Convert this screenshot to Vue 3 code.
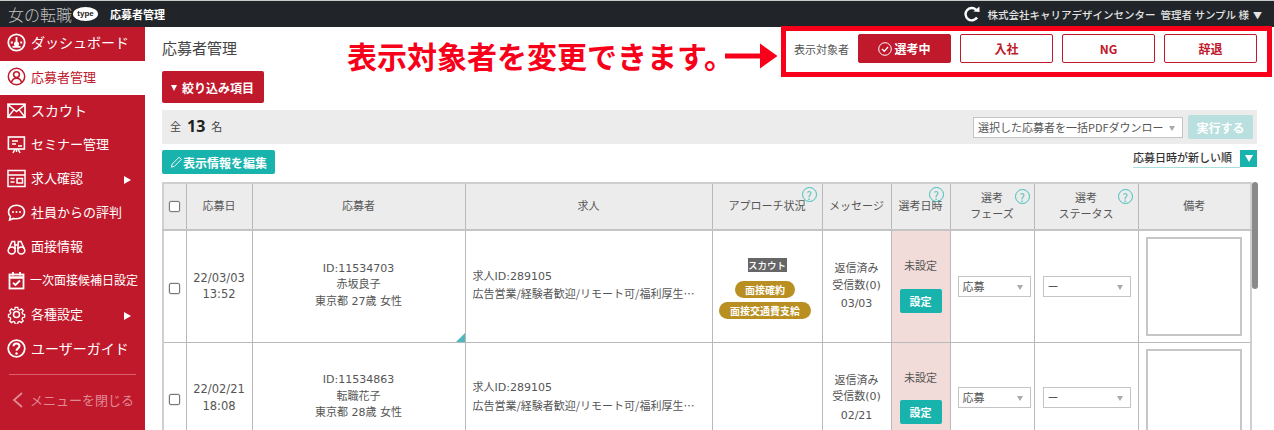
<script setup>
const navItems = [
  { label: 'ダッシュボード', icon: 'dash', size: 'lg' },
  { label: '応募者管理', icon: 'user', active: true },
  { label: 'スカウト', icon: 'mail', size: 'lg' },
  { label: 'セミナー管理', icon: 'seminar' },
  { label: '求人確認', icon: 'job', arrow: true },
  { label: '社員からの評判', icon: 'chat' },
  { label: '面接情報', icon: 'bino' },
  { label: '一次面接候補日設定', icon: 'cal', size: 'sm' },
  { label: '各種設定', icon: 'gear', arrow: true },
  { label: 'ユーザーガイド', icon: 'help', size: 'lg' }
]
const filters = ['入社', 'NG', '辞退']
const rows = [
  { date: '22/03/03', time: '13:52', id: 'ID:11534703', name: '赤坂良子', info: '東京都 27歳 女性', recv: '03/03', tags: true },
  { date: '22/02/21', time: '18:08', id: 'ID:11534863', name: '転職花子', info: '東京都 28歳 女性', recv: '02/21', tags: false }
]
</script>

<template>
  <div class="page">
    <header class="topbar">
      <div class="logo">
        <span class="logo-text">女の転職</span>
        <span class="logo-pill">type</span>
      </div>
      <span class="top-title">応募者管理</span>
      <div class="top-right">
        <svg class="refresh" width="16" height="16" viewBox="0 0 16 16">
          <path d="M13 11.5A6.2 6.2 0 1 1 12 3.6" fill="none" stroke="#fff" stroke-width="2.4" />
          <path d="M9.4 5.6 15.6 6 15.4 0.6Z" fill="#fff" />
        </svg>
        <span class="company">株式会社キャリアデザインセンター</span>
        <span class="admin">管理者 サンプル 様<small>▼</small></span>
      </div>
    </header>

    <div class="body">
      <aside class="sidebar">
        <nav>
          <a v-for="item in navItems" :key="item.label" class="nav-item" :class="{ active: item.active }">
            <svg class="nav-icon" width="19" height="19" viewBox="0 0 19 19" fill="none" stroke="currentColor" stroke-width="1.5">
              <template v-if="item.icon === 'dash'">
                <circle cx="9.5" cy="9.5" r="8.2" stroke-width="1.8" />
                <path d="M9.5 4v7M3.8 9.5h2M13.2 9.5h2M5.5 13.8h8" stroke-width="1.8" />
                <circle cx="9.5" cy="11" r="1.8" fill="currentColor" />
              </template>
              <template v-else-if="item.icon === 'user'">
                <circle cx="9.5" cy="9.5" r="8.2" />
                <circle cx="9.5" cy="7.6" r="2.9" />
                <path d="M4.4 15.6c.7-3 2.6-4.4 5.1-4.4s4.4 1.4 5.1 4.4" />
              </template>
              <template v-else-if="item.icon === 'mail'">
                <rect x="1" y="3.2" width="17" height="13" stroke-width="1.7" />
                <path d="M1 3.6 9.5 10.6 18 3.6M1 16 7 8.6M18 16 12 8.6" stroke-width="1.5" />
              </template>
              <template v-else-if="item.icon === 'seminar'">
                <rect x="1.4" y="2" width="16" height="12" stroke-width="1.6" />
                <path d="M5 6h6M5 9h4M11 11h4M9.5 14v3M6 18l2-4M13 18l-2-4" />
              </template>
              <template v-else-if="item.icon === 'job'">
                <rect x="1" y="1.5" width="17" height="16" stroke-width="1.5" />
                <path d="M1 6h17M3.5 9.5h4M3.5 13h4" />
                <rect x="10" y="9.5" width="5.5" height="4.5" />
              </template>
              <template v-else-if="item.icon === 'chat'">
                <path d="M9.5 2.2c4.6 0 8 2.9 8 6.8s-3.400 6.800-8 6.800c-1 0-2-.1-2.900-.4L2.600 17l.8-3.600C2 12.200 1.500 10.700 1.500 9c0-3.900 3.400-6.800 8-6.800Z" stroke-width="1.6" />
                <circle cx="6" cy="9" r="1" fill="currentColor" stroke="none" />
                <circle cx="9.500" cy="9" r="1" fill="currentColor" stroke="none" />
                <circle cx="13" cy="9" r="1" fill="currentColor" stroke="none" />
              </template>
              <template v-else-if="item.icon === 'bino'">
                <circle cx="4.700" cy="13.500" r="3.500" stroke-width="1.600" />
                <circle cx="14.300" cy="13.500" r="3.500" stroke-width="1.600" />
                <path d="M1.600 12 5 4.500h2.600l.6 7.500M17.400 12 14 4.500h-2.600l-.6 7.500M8 8h3" stroke-width="1.600" />
              </template>
              <template v-else-if="item.icon === 'cal'">
                <rect x="2.500" y="3.500" width="14" height="14" stroke-width="1.800" />
                <path d="M2.500 6.500h14" stroke-width="2.500" />
                <path d="M6 1v3.500M13 1v3.500" stroke-width="1.800" />
                <path d="M6 11.800 8.500 14 13 9.500" stroke-width="1.800" />
              </template>
              <template v-else-if="item.icon === 'gear'">
                <circle cx="9.500" cy="9.500" r="3" />
                <path d="M8 1.300h3l.5 2.500 1.600.7 2.200-1.400 2 2.100-1.400 2.100.7 1.700 2.300.5v3l-2.300.5-.7 1.600 1.300 2.200-2 2-2.200-1.300-1.600.7-.5 2.300H8l-.5-2.300-1.600-.7-2.200 1.300-2-2 1.300-2.200-.7-1.600-2-.5v-3l2-.5.7-1.700-1.300-2.100 2-2.100 2.200 1.400 1.600-.7Z" transform="translate(1.200 1.200) scale(.87)" />
              </template>
              <template v-else>
                <circle cx="9.500" cy="9.500" r="8.300" stroke-width="1.800" />
                <path d="M6.500 7.300c0-1.800 1.300-2.900 3-2.900s3 1.100 3 2.700c0 2.200-3 2.300-3 4.600" stroke-width="2" />
                <circle cx="9.500" cy="14.500" r="1.200" fill="currentColor" stroke="none" />
              </template>
            </svg>
            <span class="nav-label" :class="item.size">{{ item.label }}</span>
            <span v-if="item.arrow" class="nav-arrow"></span>
          </a>
        </nav>
        <div class="nav-close">
          <svg width="12" height="16" viewBox="0 0 12 16" fill="none" stroke="currentColor" stroke-width="1.800">
            <path d="M10 1 2 8l8 7" />
          </svg>
          <span>メニューを閉じる</span>
        </div>
      </aside>

      <main class="main">
        <div class="title-row">
          <h1>応募者管理</h1>
          <div class="filters">
            <span class="filter-label">表示対象者</span>
            <button class="filter on">
              <svg width="14" height="14" viewBox="0 0 14 14" fill="none" stroke="#fff">
                <circle cx="7" cy="7" r="6.300" />
                <path d="M4 7l2.300 2.300L10 5" stroke-width="1.300" />
              </svg>
              選考中
            </button>
            <button v-for="f in filters" :key="f" class="filter">{{ f }}</button>
          </div>
        </div>

        <button class="narrow-btn"><i class="tri"></i>絞り込み項目</button>

        <div class="count-bar">
          <div class="count"><small>全</small><b>13</b><small>名</small></div>
          <div class="bulk">
            <div class="select bulk-select">選択した応募者を一括PDFダウンロー<i></i></div>
            <button class="run">実行する</button>
          </div>
        </div>

        <div class="tools">
          <button class="edit-btn">
            <svg width="13" height="14" viewBox="0 0 14 14" fill="none" stroke="#fff">
              <path d="M1.500 12.500 2.300 9.300 9.800 1.800l2.400 2.400-7.500 7.500Z" />
            </svg>
            表示情報を編集
          </button>
          <div class="sort">
            <span>応募日時が新しい順</span>
            <i><b></b></i>
          </div>
        </div>

        <div class="table-wrap">
          <table>
            <colgroup>
              <col style="width: 23px" />
              <col style="width: 66px" />
              <col style="width: 213px" />
              <col style="width: 247px" />
              <col style="width: 110px" />
              <col style="width: 69px" />
              <col style="width: 59px" />
              <col style="width: 84px" />
              <col style="width: 104px" />
              <col style="width: 113px" />
            </colgroup>
            <thead>
              <tr>
                <th><span class="check"></span></th>
                <th>応募日</th>
                <th>応募者</th>
                <th>求人</th>
                <th class="rel">アプローチ状況<span class="q q1">?</span></th>
                <th>メッセージ</th>
                <th class="rel">選考日時<span class="q q2">?</span></th>
                <th class="rel">選考<br />フェーズ<span class="q q3">?</span></th>
                <th class="rel">選考<br />ステータス<span class="q q4">?</span></th>
                <th>備考</th>
              </tr>
            </thead>
            <tbody>
              <tr v-for="(r, i) in rows" :key="r.id">
                <td><span class="check"></span></td>
                <td class="c date">{{ r.date }}<br />{{ r.time }}</td>
                <td class="c rel applicant">
                  {{ r.id }}<br />{{ r.name }}<br />{{ r.info }}
                  <span v-if="i === 0" class="corner"></span>
                </td>
                <td class="job">求人ID:289105<br /><span>広告営業/経験者歓迎/リモート可/福利厚生…</span></td>
                <td class="c">
                  <div v-if="r.tags" class="tags">
                    <span class="scout">スカウト</span>
                    <span class="pill p1">面接確約</span>
                    <span class="pill">面接交通費支給</span>
                  </div>
                </td>
                <td class="c msg">返信済み<br />受信数(0)<br /><span>{{ r.recv }}</span></td>
                <td class="c schedule">
                  <div>未設定</div>
                  <button class="set-btn">設定</button>
                </td>
                <td><div class="select phase">応募<i></i></div></td>
                <td><div class="select status">ー<i></i></div></td>
                <td class="note"><div class="textarea"></div></td>
              </tr>
            </tbody>
          </table>
          <div class="scrollbar"></div>
        </div>
      </main>
    </div>

    <div class="annotation">
      <span class="note-text">表示対象者を変更できます。</span>
      <svg class="note-arrow" width="53" height="26" viewBox="0 0 53 26">
        <path d="M0 10.500h35V0.500L52.500 13 35 25.500v-10H0Z" fill="#f8001a" />
      </svg>
    </div>
    <div class="frame"></div>
  </div>
</template>

<style>
html, body { margin: 0; background: #fff; overflow: hidden; }
</style>

<style scoped>
.page {
  position: relative;
  width: 1274px;
  height: 430px;
  overflow: hidden;
  font-family: "Noto Sans CJK JP", "Open Sans", sans-serif;
  color: #555;
  font-size: 11px;
}
.topbar {
  height: 26px;
  border-top: 1px solid #c9c9c9;
  background: #212529;
  color: #fff;
  display: flex;
  align-items: center;
  padding-left: 8px;
  box-sizing: content-box;
}
.logo { display: flex; align-items: center; width: 102px; }
.logo-text { font-size: 16px; font-weight: 300; color: #c4c4c4; width: 65px; white-space: nowrap; }
.logo-pill {
  width: 25px; height: 14px; border-radius: 50%;
  background: #fff; color: #222;
  font: bold 8px/14px "Liberation Sans", sans-serif;
  text-align: center;
}
.top-title { font-size: 11px; font-weight: 700; }
.top-right { margin-left: auto; display: flex; align-items: center; padding-right: 12px; color: #e4e4e4; font-size: 10.5px; font-weight: 500; }
.refresh { margin-right: 8px; }
.company { margin-right: 10px; width: 163px; white-space: nowrap; }
.admin { white-space: nowrap; }
.admin small { font-size: 9px; margin-left: 4px; }

.body { display: flex; height: 403px; }
.sidebar { width: 145px; flex: none; background: #c0192c; color: #fff; }
.nav-item { display: flex; align-items: center; height: 34px; padding: 0 0 3px 7px; box-sizing: border-box; position: relative; }
.nav-item.active { background: #fff; color: #c0192c; }
.nav-item.active .nav-label { margin-top: 0; }
.nav-icon { flex: none; margin-right: 5px; }
.nav-label { font-size: 13px; white-space: nowrap; margin-top: -2px; }
.nav-label.lg { font-size: 14px; }
.nav-label.sm { font-size: 12px; margin-left: -1px; }
.nav-arrow {
  position: absolute; left: 124px; top: 13px;
  border-left: 7px solid #fff; border-top: 4px solid transparent; border-bottom: 4px solid transparent;
}
.nav-close {
  margin: 7px 9px 0;
  border-top: 1px solid #d9606c;
  padding: 15px 0 0 3px;
  display: flex; align-items: center; gap: 6px;
  color: #e08a94;
  font-size: 13px;
  white-space: nowrap;
}

.main { flex: 1; padding: 0 17px 0 17px; min-width: 0; }
.title-row { height: 44px; display: flex; align-items: center; justify-content: space-between; }
h1 { margin: 0 0 4px; font-size: 15px; font-weight: 400; color: #444; }
.filters { display: flex; align-items: center; gap: 9px; margin-top: -1px; }
.filter-label { font-size: 11px; color: #555; }
.filter {
  width: 93px; height: 29px; box-sizing: border-box;
  background: #fff; border: 1px solid #c0192c; border-radius: 2px;
  color: #c0192c; font: 700 12px "Noto Sans CJK JP", sans-serif;
  display: flex; align-items: center; justify-content: center; gap: 2px; padding: 0;
}
.filter.on { background: #c0192c; color: #fff; }
.narrow-btn {
  display: flex; align-items: center; gap: 5px;
  width: 102px; height: 32px; padding: 0 0 0 9px; margin-bottom: 7px;
  background: #c0192c; color: #fff; border: 0; border-radius: 2px;
  font: 700 12px "Noto Sans CJK JP", sans-serif;
  white-space: nowrap;
}
.tri { border-top: 6px solid #fff; border-left: 3.500px solid transparent; border-right: 3.500px solid transparent; margin-top: 2px; }
.count-bar {
  height: 34px; background: #ececec;
  display: flex; align-items: center; justify-content: space-between;
  padding: 0 4px 0 8px;
}
.count { display: flex; align-items: center; gap: 6px; color: #333; padding-bottom: 3px; }
.count small { font-size: 11px; color: #444; }
.count b { font: 700 16px "Open Sans", sans-serif; color: #222; }
.bulk { display: flex; align-items: center; gap: 5px; }
.select {
  position: relative; box-sizing: border-box; background: #fff;
  border: 1px solid #c4c4c4; height: 21px; line-height: 19px;
  font-size: 11px; padding-left: 4px; color: #555; white-space: nowrap; overflow: hidden;
}
.select i {
  position: absolute; right: 7px; top: 8px;
  border-top: 5px solid #aaa; border-left: 3px solid transparent; border-right: 3px solid transparent;
}
.bulk-select { width: 210px; }
.run {
  width: 65px; height: 24px; border: 0; border-radius: 2px; background: #b9e0de; color: #fff;
  font: 700 12px "Noto Sans CJK JP", sans-serif; padding: 0;
}
.tools { display: flex; justify-content: space-between; align-items: flex-start; padding-top: 6px; box-sizing: border-box; height: 38px; }
.edit-btn {
  width: 113px; height: 24px; background: #19b3ae; color: #fff; border: 0; border-radius: 2px;
  font: 700 12px "Noto Sans CJK JP", sans-serif; padding: 0 0 0 8px;
  display: flex; align-items: center; white-space: nowrap;
}
.sort { display: flex; align-items: flex-start; font-size: 11px; font-weight: 500; color: #333; }
.sort span { border-bottom: 1px solid #a8dedb; padding-bottom: 1px; height: 16px; line-height: 15px; padding-right: 8px; }
.sort i { width: 17px; height: 17px; background: #19b3ae; display: flex; align-items: center; justify-content: center; }
.sort b { border-top: 7px solid #fff; border-left: 4px solid transparent; border-right: 4px solid transparent; }

.table-wrap { position: relative; }
table {
  table-layout: fixed; width: 1088px; border-collapse: collapse;
  border: 2px solid #cfcfcf; font-size: 11px; box-sizing: border-box;
}
th, td { box-sizing: border-box; border: 1px solid #b9b9b9; padding: 0; text-align: center; color: #555; line-height: 16.500px; }
th { height: 47px; padding-bottom: 3px; background: #ececec; font-weight: 400; border-bottom: 2px solid #c4c4c4; }
td { height: 112px; }
.rel { position: relative; }
.check {
  display: inline-block; width: 9px; height: 9px; border: 1px solid #777; border-radius: 2px;
  background: #fff; vertical-align: middle; box-shadow: 0 0 0 .5px #ccc;
}
.q {
  position: absolute; width: 15px; height: 15px; line-height: 14px; box-sizing: border-box;
  border: 1px solid #43c0bb; border-radius: 50%; color: #43c0bb; font-size: 11px; text-align: center;
}
.q1 { right: 5px; top: 3px; }
.q2 { right: 6px; top: 3px; }
.q3 { right: 4px; top: 5px; }
.q4 { right: 5px; top: 5px; }
.date { font: 11.500px/16.500px "DejaVu Sans", "Noto Sans CJK JP", sans-serif; }
.applicant { padding-bottom: 2px; font-family: "DejaVu Sans", "Noto Sans CJK JP", sans-serif; }
.job { text-align: left; padding-left: 7px; white-space: nowrap; overflow: hidden; font-family: "DejaVu Sans", "Noto Sans CJK JP", sans-serif; }
.job span { font-family: "Noto Sans CJK JP", sans-serif; }
.corner {
  position: absolute; right: 0; bottom: 0;
  border-bottom: 9px solid #4db8bf; border-left: 9px solid transparent;
}
.tags { display: flex; flex-direction: column; align-items: center; padding-top: 5px; }
.scout { background: #666; color: #fff; font-size: 9.500px; font-weight: 500; line-height: 14px; width: 39px; white-space: nowrap; margin-bottom: 9px; }
.pill {
  background: #b98f21; color: #fff; border-radius: 9px; height: 17px; line-height: 17px;
  font-size: 10px; font-weight: 700; width: 92px; white-space: nowrap; margin-right: 4px;
}
.p1 { width: 60px; margin-bottom: 4px; }
.msg { padding-top: 1px; font-family: "DejaVu Sans", "Noto Sans CJK JP", sans-serif; }
.msg span { display: block; margin-top: 2px; }
.schedule { background: #f2dcd9; vertical-align: top; padding-top: 26px; }
.set-btn {
  width: 42px; height: 24px; background: #19b3ae; color: #fff; border: 0; border-radius: 2px;
  font: 700 11px "Noto Sans CJK JP", sans-serif; margin-top: 15px; padding: 0;
}
td .select { text-align: left; margin: 0 0 0 7px; }
td .phase { width: 73px; }
td .status { width: 88px; margin-left: 8px; }
.note { vertical-align: top; }
.textarea { width: 96px; height: 99px; box-sizing: border-box; margin: 6px 0 0 7px; border: 2px solid #c6c6c6; background: #fff; }
.scrollbar {
  position: absolute; right: -1px; top: 0; width: 6px; height: 107px;
  background: #8a8a8a; border-radius: 3px;
}
.annotation {
  position: absolute; left: 347px; top: 35px; display: flex; align-items: center;
}
.note-text { font-size: 30px; line-height: 40px; font-weight: 700; color: #f8001a; white-space: nowrap; }
.note-arrow { margin-left: -9.500px; margin-top: 1px; }
.frame {
  position: absolute; left: 781px; top: 26px; width: 491px; height: 51px;
  border: 5px solid #f8001a; box-sizing: border-box;
}
</style>
